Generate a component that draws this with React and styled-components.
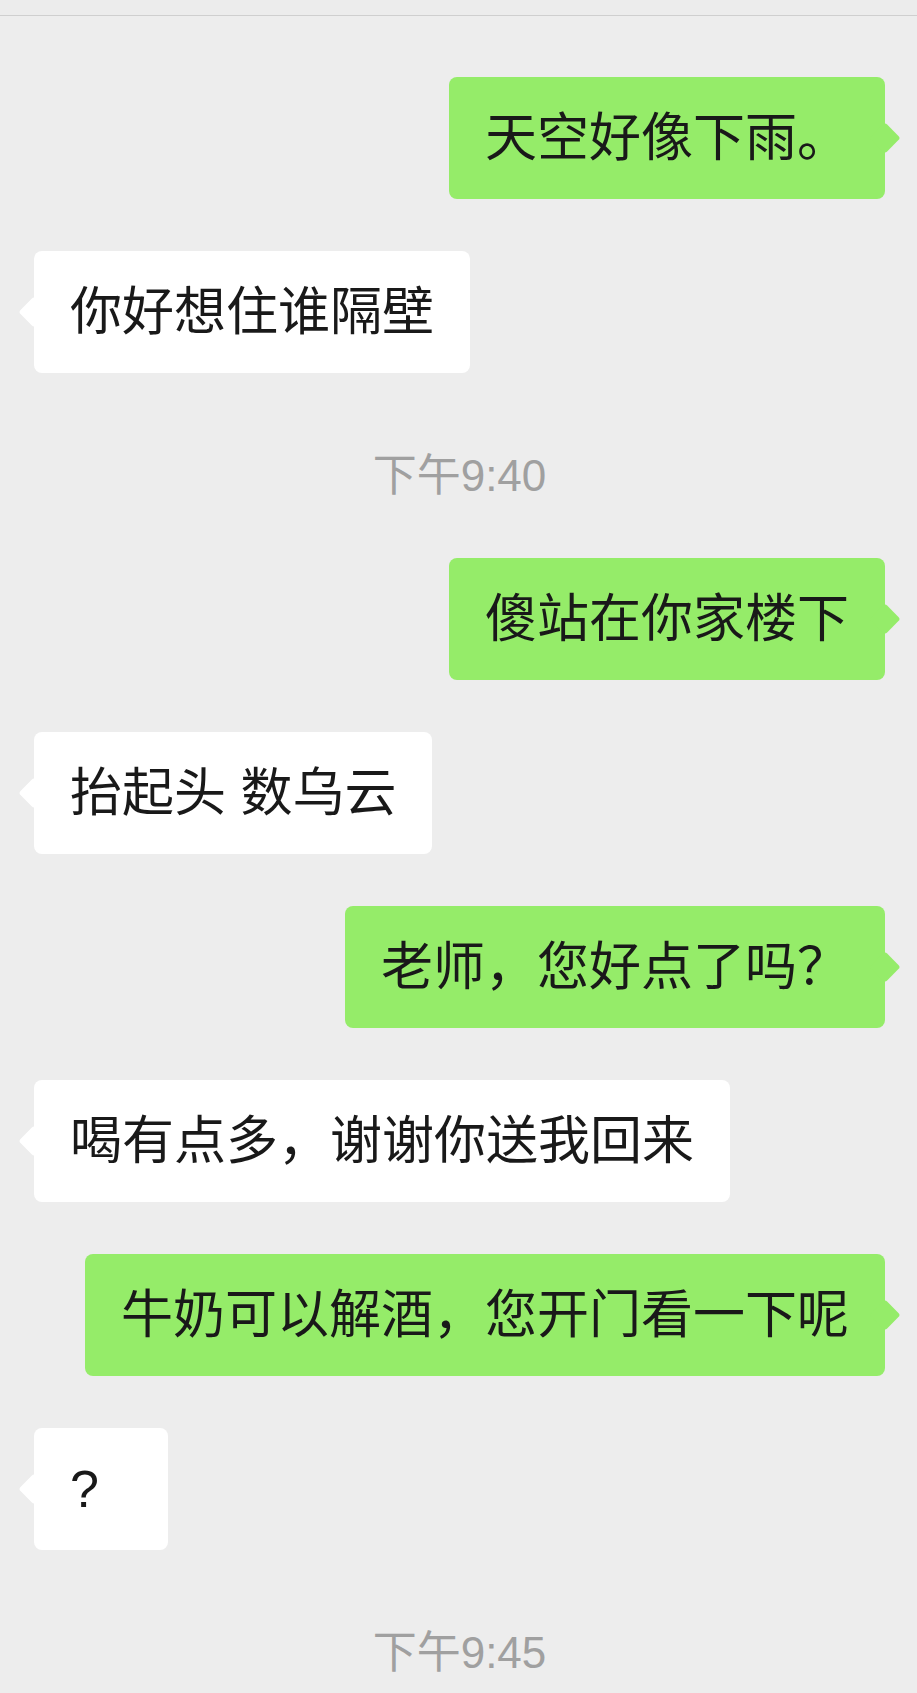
import React from "react";
import styled, { createGlobalStyle } from "styled-components";

const GlobalStyle = createGlobalStyle`
  html, body {
    margin: 0;
    padding: 0;
    background: #ededed;
  }
  body {
    font-family: "Liberation Sans", "Noto Sans CJK SC", sans-serif;
  }
`;

const Page = styled.div`
  width: 917px;
  min-height: 1693px;
  background: #ededed;
  display: flex;
  flex-direction: column;
`;

const TopBar = styled.div`
  height: 15px;
  background: #ececec;
  border-bottom: 1px solid #cfcfcf;
`;

const Chat = styled.div`
  display: flex;
  flex-direction: column;
  gap: 52px;
  padding: 61px 32px 40px 34px;
`;

const Row = styled.div`
  display: flex;
  justify-content: ${(p) => (p.$mine ? "flex-end" : "flex-start")};
`;

const Bubble = styled.div`
  position: relative;
  min-width: 62px;
  padding: 24px 36px;
  border-radius: 8px;
  font-size: 52px;
  line-height: 74px;
  color: #191919;
  white-space: nowrap;
  background: ${(p) => (p.$mine ? "#95ec69" : "#ffffff")};

  &::after {
    content: "";
    position: absolute;
    top: 50%;
    ${(p) => (p.$mine ? "right: -11px;" : "left: -11px;")}
    width: 22px;
    height: 22px;
    border-radius: 3px;
    background: inherit;
    transform: translateY(-50%) rotate(45deg);
  }
`;

const Time = styled.div`
  padding: 26px 0 5px;
  text-align: center;
  font-size: 44px;
  line-height: 50px;
  color: #a0a0a0;
`;

const messages = [
  { mine: true, text: "天空好像下雨。" },
  { mine: false, text: "你好想住谁隔壁" },
  { time: "下午9:40" },
  { mine: true, text: "傻站在你家楼下" },
  { mine: false, text: "抬起头 数乌云" },
  { mine: true, text: "老师，您好点了吗？" },
  { mine: false, text: "喝有点多，谢谢你送我回来" },
  { mine: true, text: "牛奶可以解酒，您开门看一下呢" },
  { mine: false, text: "?" },
  { time: "下午9:45" },
];

function App() {
  return (
    <Page>
      <GlobalStyle />
      <TopBar />
      <Chat>
        {messages.map((m, i) =>
          m.time ? (
            <Time key={i}>{m.time}</Time>
          ) : (
            <Row key={i} $mine={m.mine}>
              <Bubble $mine={m.mine}>{m.text}</Bubble>
            </Row>
          )
        )}
      </Chat>
    </Page>
  );
}

export default App;
